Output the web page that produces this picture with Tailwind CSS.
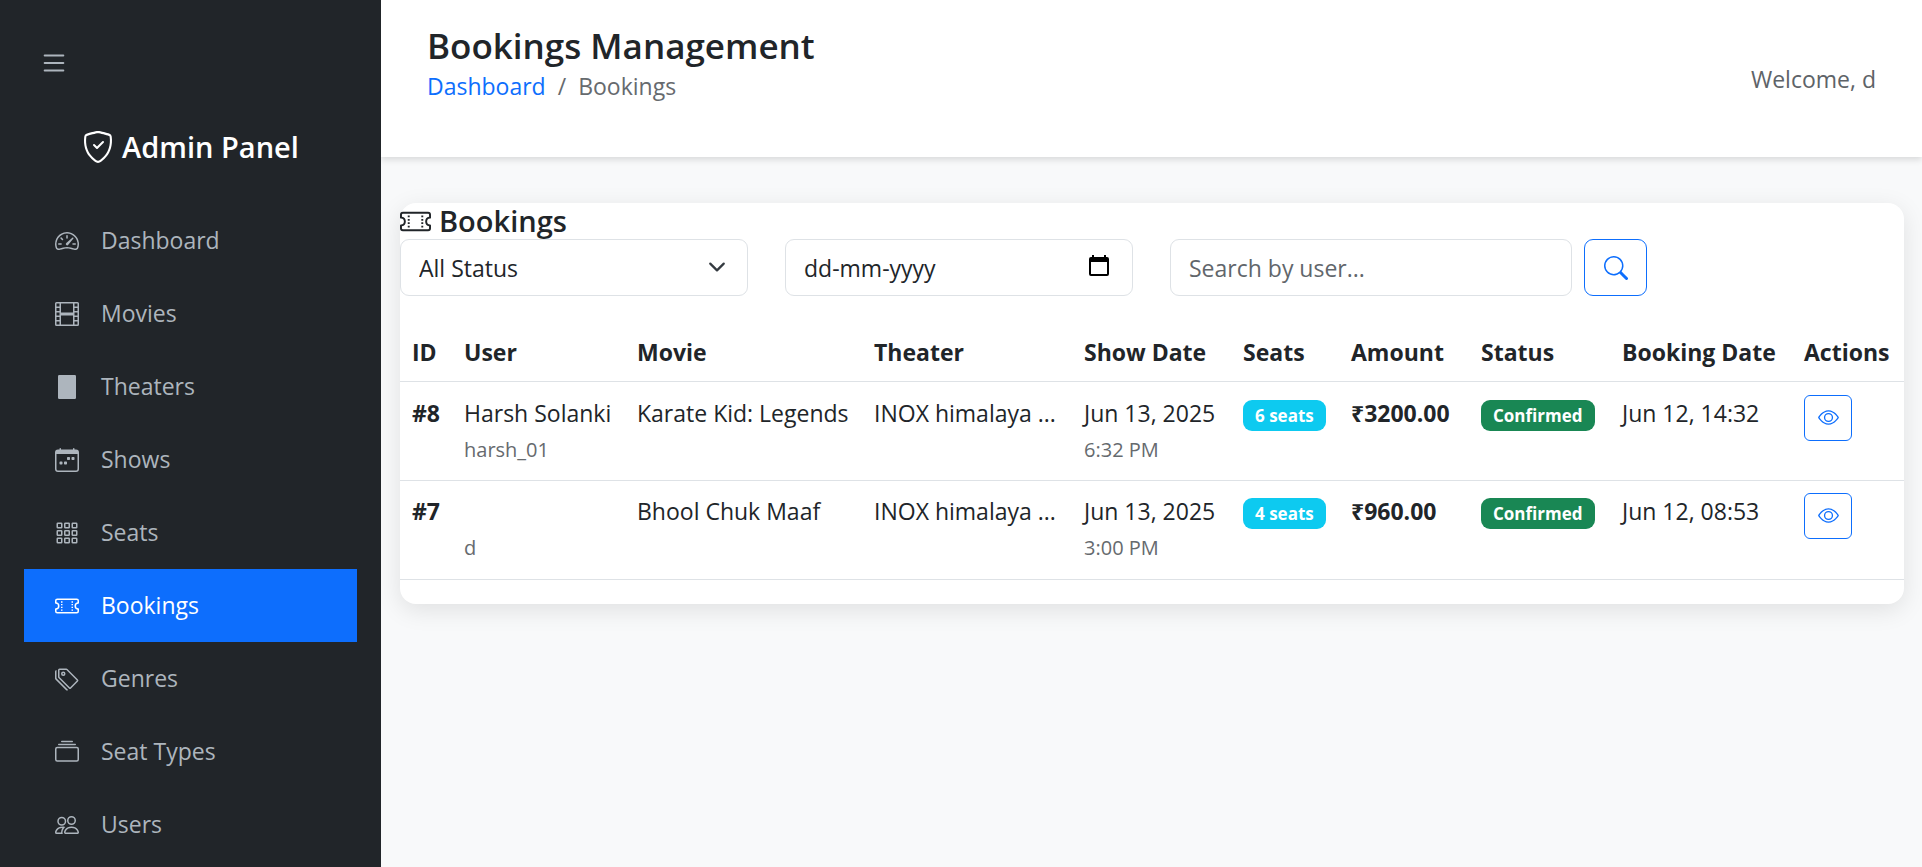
<!DOCTYPE html>
<html lang="en">
<head>
<meta charset="utf-8">
<meta name="viewport" content="width=device-width, initial-scale=1">
<title>Bookings Management</title>
<script src="https://cdn.jsdelivr.net/npm/@tailwindcss/browser@4"></script>
</head>
<body class="flex h-screen overflow-hidden bg-[#f8f9fa] font-['Open_Sans','Noto_Sans',sans-serif] text-[23px] leading-[37px] text-[#212529]">

<svg class="hidden" aria-hidden="true">
  <symbol id="ticket" viewBox="0 0 16 16"><path d="M4 4.85v.9h1v-.9zm7 0v.9h1v-.9zm-7 1.8v.9h1v-.9zm7 0v.9h1v-.9zm-7 1.8v.9h1v-.9zm7 0v.9h1v-.9zm-7 1.8v.9h1v-.9zm7 0v.9h1v-.9z"/><path d="M1.5 3A1.5 1.5 0 0 0 0 4.5V6a.5.5 0 0 0 .5.5 1.5 1.5 0 1 1 0 3 .5.5 0 0 0-.5.5v1.5A1.5 1.5 0 0 0 1.5 13h13a1.5 1.5 0 0 0 1.5-1.5V10a.5.5 0 0 0-.5-.5 1.5 1.5 0 0 1 0-3A.5.5 0 0 0 16 6V4.5A1.5 1.5 0 0 0 14.5 3zM1 4.5a.5.5 0 0 1 .5-.5h13a.5.5 0 0 1 .5.5v1.05a2.5 2.5 0 0 0 0 4.9v1.05a.5.5 0 0 1-.5.5h-13a.5.5 0 0 1-.5-.5v-1.05a2.5 2.5 0 0 0 0-4.9z"/></symbol>
  <symbol id="eye" viewBox="0 0 16 16"><path d="M16 8s-3-5.5-8-5.5S0 8 0 8s3 5.5 8 5.5S16 8 16 8M1.173 8a13 13 0 0 1 1.66-2.043C4.12 4.668 5.88 3.5 8 3.5s3.879 1.168 5.168 2.457A13 13 0 0 1 14.828 8q-.086.13-.195.288c-.335.48-.83 1.12-1.465 1.755C11.879 11.332 10.119 12.5 8 12.5s-3.879-1.168-5.168-2.457A13 13 0 0 1 1.172 8z"/><path d="M8 5.5a2.5 2.5 0 1 0 0 5 2.5 2.5 0 0 0 0-5M4.5 8a3.5 3.5 0 1 1 7 0 3.5 3.5 0 0 1-7 0"/></symbol>
</svg>

<aside class="z-10 flex w-[381px] shrink-0 flex-col bg-[#212529] px-6 pt-10">
  <button type="button" aria-label="Toggle sidebar" class="ml-[15px] flex h-[45px] w-[30px] items-center text-[#adb5bd]">
    <svg class="size-[30px]" viewBox="0 0 16 16" fill="currentColor"><path d="M2.5 12a.5.5 0 0 1 .5-.5h10a.5.5 0 0 1 0 1H3a.5.5 0 0 1-.5-.5m0-4a.5.5 0 0 1 .5-.5h10a.5.5 0 0 1 0 1H3a.5.5 0 0 1-.5-.5m0-4a.5.5 0 0 1 .5-.5h10a.5.5 0 0 1 0 1H3a.5.5 0 0 1-.5-.5"/></svg>
  </button>
  <h2 class="mt-10 mb-9 flex h-[43px] items-center justify-center gap-2 text-[29px] font-semibold text-white">
    <svg class="size-8" viewBox="0 0 16 16" fill="currentColor"><path d="M5.338 1.59a61 61 0 0 0-2.837.856.48.48 0 0 0-.328.39c-.554 4.157.726 7.19 2.253 9.188a10.7 10.7 0 0 0 2.287 2.233c.346.244.652.42.893.533q.18.085.293.118a1 1 0 0 0 .101.025 1 1 0 0 0 .1-.025q.114-.034.294-.118c.24-.113.547-.29.893-.533a10.7 10.7 0 0 0 2.287-2.233c1.527-1.997 2.807-5.031 2.253-9.188a.48.48 0 0 0-.328-.39c-.651-.213-1.75-.56-2.837-.855C9.552 1.29 8.531 1.067 8 1.067c-.53 0-1.552.223-2.662.524zM5.072.56C6.157.265 7.31 0 8 0s1.843.265 2.928.56c1.11.3 2.229.655 2.887.87a1.54 1.54 0 0 1 1.044 1.262c.596 4.477-.787 7.795-2.465 9.99a11.8 11.8 0 0 1-2.517 2.453 7 7 0 0 1-1.048.625c-.28.132-.581.24-.829.24s-.548-.108-.829-.24a7 7 0 0 1-1.048-.625 11.8 11.8 0 0 1-2.517-2.453C1.928 10.487.545 7.169 1.141 2.692A1.54 1.54 0 0 1 2.185 1.43 63 63 0 0 1 5.072.56"/><path d="M10.854 5.146a.5.5 0 0 1 0 .708l-3 3a.5.5 0 0 1-.708 0l-1.5-1.5a.5.5 0 1 1 .708-.708L7.5 7.793l2.646-2.647a.5.5 0 0 1 .708 0"/></svg>
    Admin Panel
  </h2>
  <nav class="flex flex-col text-[#adb5bd]">
    <a href="#" class="flex h-[73px] shrink-0 items-center gap-[22px] px-[31px]">
      <svg class="size-6" viewBox="0 0 16 16" fill="currentColor"><path d="M8 4a.5.5 0 0 1 .5.5V6a.5.5 0 0 1-1 0V4.5A.5.5 0 0 1 8 4M3.732 5.732a.5.5 0 0 1 .707 0l.915.914a.5.5 0 1 1-.708.708l-.914-.915a.5.5 0 0 1 0-.707M2 10a.5.5 0 0 1 .5-.5h1.586a.5.5 0 0 1 0 1H2.5A.5.5 0 0 1 2 10m9.5 0a.5.5 0 0 1 .5-.5h1.5a.5.5 0 0 1 0 1H12a.5.5 0 0 1-.5-.5m.754-4.246a.39.39 0 0 0-.527-.02L7.547 9.31a.91.91 0 1 0 1.302 1.258l3.434-4.297a.39.39 0 0 0-.029-.518z"/><path fill-rule="evenodd" d="M0 10a8 8 0 1 1 15.547 2.661c-.442 1.253-1.845 1.602-2.932 1.25C11.309 13.488 9.475 13 8 13c-1.474 0-3.31.488-4.615.911-1.087.352-2.49.003-2.932-1.25A8 8 0 0 1 0 10m8-7a7 7 0 0 0-6.603 9.329c.203.575.923.876 1.68.63C4.397 12.533 6.358 12 8 12s3.604.532 4.923.96c.757.245 1.477-.056 1.68-.631A7 7 0 0 0 8 3"/></svg>
      Dashboard
    </a>
    <a href="#" class="flex h-[73px] shrink-0 items-center gap-[22px] px-[31px]">
      <svg class="size-6" viewBox="0 0 16 16" fill="currentColor"><path d="M0 1a1 1 0 0 1 1-1h14a1 1 0 0 1 1 1v14a1 1 0 0 1-1 1H1a1 1 0 0 1-1-1zm4 0v6h8V1zm8 8H4v6h8zM1 1v2h2V1zm2 3H1v2h2zM1 7v2h2V7zm2 3H1v2h2zm-2 3v2h2v-2zM15 1h-2v2h2zm-2 3v2h2V4zm2 3h-2v2h2zm-2 3v2h2v-2zm2 3h-2v2h2z"/></svg>
      Movies
    </a>
    <a href="#" class="flex h-[73px] shrink-0 items-center gap-[22px] px-[31px]">
      <svg class="size-6" viewBox="0 0 16 16" fill="currentColor"><rect x="2" width="12" height="16" rx="0.8"/></svg>
      Theaters
    </a>
    <a href="#" class="flex h-[73px] shrink-0 items-center gap-[22px] px-[31px]">
      <svg class="size-6" viewBox="0 0 16 16" fill="currentColor"><path d="M11 6.500a.5.5 0 0 1 .5-.5h1a.5.5 0 0 1 .5.5v1a.5.5 0 0 1-.5.5h-1a.5.5 0 0 1-.5-.5zm-3 0a.5.5 0 0 1 .5-.5h1a.5.5 0 0 1 .5.5v1a.5.5 0 0 1-.5.5h-1a.5.5 0 0 1-.5-.5zm-5 3a.5.5 0 0 1 .5-.5h1a.5.5 0 0 1 .5.5v1a.5.5 0 0 1-.5.5h-1a.5.5 0 0 1-.5-.5zm3 0a.5.5 0 0 1 .5-.5h1a.5.5 0 0 1 .5.5v1a.5.5 0 0 1-.5.5h-1a.5.5 0 0 1-.5-.5z"/><path d="M3.500 0a.5.5 0 0 1 .5.5V1h8V.5a.5.5 0 0 1 1 0V1h1a2 2 0 0 1 2 2v11a2 2 0 0 1-2 2H2a2 2 0 0 1-2-2V3a2 2 0 0 1 2-2h1V.5a.5.5 0 0 1 .5-.5M1 4v10a1 1 0 0 0 1 1h12a1 1 0 0 0 1-1V4z"/></svg>
      Shows
    </a>
    <a href="#" class="flex h-[73px] shrink-0 items-center gap-[22px] px-[31px]">
      <svg class="size-6" viewBox="0 0 16 16" fill="none" stroke="currentColor"><rect x="1.500" y="1.500" width="3" height="3" rx=".4"/><rect x="6.500" y="1.500" width="3" height="3" rx=".4"/><rect x="11.500" y="1.500" width="3" height="3" rx=".4"/><rect x="1.500" y="6.500" width="3" height="3" rx=".4"/><rect x="6.500" y="6.500" width="3" height="3" rx=".4"/><rect x="11.500" y="6.500" width="3" height="3" rx=".4"/><rect x="1.500" y="11.500" width="3" height="3" rx=".4"/><rect x="6.500" y="11.500" width="3" height="3" rx=".4"/><rect x="11.500" y="11.500" width="3" height="3" rx=".4"/></svg>
      Seats
    </a>
    <a href="#" aria-current="page" class="flex h-[73px] shrink-0 items-center gap-[22px] bg-[#0d6efd] px-[31px] text-white">
      <svg class="size-6" fill="currentColor"><use href="#ticket"/></svg>
      Bookings
    </a>
    <a href="#" class="flex h-[73px] shrink-0 items-center gap-[22px] px-[31px]">
      <svg class="size-6" viewBox="0 0 16 16" fill="currentColor"><path d="M3 2v4.586l7 7L14.586 9l-7-7zM2 2a1 1 0 0 1 1-1h4.586a1 1 0 0 1 .707.293l7 7a1 1 0 0 1 0 1.414l-4.586 4.586a1 1 0 0 1-1.414 0l-7-7A1 1 0 0 1 2 6.586z"/><path d="M5.500 5a.5.5 0 1 1 0-1 .5.5 0 0 1 0 1m0 1a1.500 1.500 0 1 0 0-3 1.500 1.500 0 0 0 0 3M1 7.086a1 1 0 0 0 .293.707L8.750 15.250l-.043.043a1 1 0 0 1-1.414 0l-7-7A1 1 0 0 1 0 7.586V3a1 1 0 0 1 1-1z"/></svg>
      Genres
    </a>
    <a href="#" class="flex h-[73px] shrink-0 items-center gap-[22px] px-[31px]">
      <svg class="size-6" viewBox="0 0 16 16" fill="currentColor"><path d="M2.500 3.500a.5.5 0 0 1 0-1h11a.5.5 0 0 1 0 1zm2-2a.5.5 0 0 1 0-1h7a.5.5 0 0 1 0 1zM0 13a1.500 1.500 0 0 0 1.500 1.500h13A1.500 1.500 0 0 0 16 13V6a1.500 1.500 0 0 0-1.500-1.500h-13A1.500 1.500 0 0 0 0 6zm1.500.5A.5.5 0 0 1 1 13V6a.5.5 0 0 1 .5-.5h13a.5.5 0 0 1 .5.5v7a.5.5 0 0 1-.5.5z"/></svg>
      Seat Types
    </a>
    <a href="#" class="flex h-[73px] shrink-0 items-center gap-[22px] px-[31px]">
      <svg class="size-6" viewBox="0 0 16 16" fill="currentColor"><path d="M15 14s1 0 1-1-1-4-5-4-5 3-5 4 1 1 1 1zm-7.978-1L7 12.996c.001-.264.167-1.03.76-1.72C8.312 10.629 9.282 10 11 10c1.717 0 2.687.63 3.240 1.276.593.69.758 1.457.76 1.720l-.008.002-.014.002zM11 7a2 2 0 1 0 0-4 2 2 0 0 0 0 4m3-2a3 3 0 1 1-6 0 3 3 0 0 1 6 0M6.936 9.280a6 6 0 0 0-1.230-.247A7 7 0 0 0 5 9c-4 0-5 3-5 4q0 1 1 1h4.216A2.240 2.240 0 0 1 5 13c0-1.010.377-2.042 1.090-2.904.243-.294.526-.569.846-.816M4.920 10A5.500 5.500 0 0 0 4 13H1c0-.26.164-1.030.76-1.724.545-.636 1.492-1.256 3.160-1.275ZM1.500 5.500a3 3 0 1 1 6 0 3 3 0 0 1-6 0m3-2a2 2 0 1 0 0 4 2 2 0 0 0 0-4"/></svg>
      Users
    </a>
  </nav>
</aside>

<div class="min-w-0 flex-1">
  <header class="flex h-[157px] items-start justify-between bg-white px-[46px] pt-6 shadow-[0_3px_6px_rgba(0,0,0,0.12)]">
    <div>
      <h1 class="text-[35px] leading-[44px] font-semibold">Bookings Management</h1>
      <nav aria-label="Breadcrumb">
        <ol class="flex gap-3">
          <li><a href="#" class="text-[#0d6efd]">Dashboard</a></li>
          <li aria-hidden="true" class="text-[#666a6e]">/</li>
          <li class="text-[#666a6e]">Bookings</li>
        </ol>
      </nav>
    </div>
    <p class="mt-[37px] text-[#5e6368]">Welcome, d</p>
  </header>

  <main class="mr-[18px] ml-[19px] mt-[46px] rounded-[16px] bg-white pb-6 shadow-[0_6px_24px_rgba(0,0,0,0.1)]">
    <h2 class="flex h-9 items-center gap-2 text-[29px] leading-[34px] font-semibold">
      <svg class="size-[31px]" fill="currentColor"><use href="#ticket"/></svg>
      Bookings
    </h2>
    <form class="flex">
      <div class="relative mr-[37px] w-[348px]">
        <select aria-label="Status" class="block h-[57px] w-full appearance-none rounded-[9px] border border-[#dee2e6] bg-white pt-0.5 pl-[18px]">
          <option>All Status</option>
        </select>
        <svg class="pointer-events-none absolute top-[19px] right-[22px] size-[18px]" viewBox="0 0 16 16" fill="none" stroke="#343a40" stroke-width="2" stroke-linecap="round" stroke-linejoin="round"><path d="m2 5 6 6 6-6"/></svg>
      </div>
      <div class="relative mr-[37px] w-[348px]">
        <input type="text" aria-label="Booking date" placeholder="dd-mm-yyyy" class="block h-[57px] w-full rounded-[9px] border border-[#dee2e6] bg-white pl-[18px] placeholder:text-[#212529]">
        <button type="button" aria-label="Open calendar" class="absolute top-4 right-6 h-[22px] w-5">
          <svg class="h-[22px] w-5" viewBox="0 0 20 22"><path fill="#000" fill-rule="evenodd" d="M3 0h2v2h10V0h2v2h1a2 2 0 0 1 2 2v15a2 2 0 0 1-2 2H2a2 2 0 0 1-2-2V4a2 2 0 0 1 2-2h1zM2 7v12h16V7z"/></svg>
        </button>
      </div>
      <input type="text" aria-label="Search by user" placeholder="Search by user..." class="mr-3 h-[57px] w-[402px] rounded-[9px] border border-[#dee2e6] bg-white pl-[18px] placeholder:text-[#61666b]">
      <button type="submit" aria-label="Search" class="flex h-[57px] w-[63px] items-center justify-center rounded-[9px] border border-[#0d6efd] text-[#0d6efd]">
        <svg class="size-6" viewBox="0 0 16 16" fill="currentColor"><path d="M11.742 10.344a6.500 6.500 0 1 0-1.397 1.398h-.001q.044.06.098.115l3.850 3.850a1 1 0 0 0 1.415-1.414l-3.850-3.850a1 1 0 0 0-.115-.1zM12 6.500a5.500 5.500 0 1 1-11 0 5.500 5.500 0 0 1 11 0"/></svg>
      </button>
    </form>

    <table class="mt-6 w-full table-fixed border-collapse text-left whitespace-nowrap">
      <colgroup>
        <col class="w-[52px]"><col class="w-[173px]"><col class="w-[237px]"><col class="w-[210px]"><col class="w-[159px]"><col class="w-[108px]"><col class="w-[130px]"><col class="w-[141px]"><col class="w-[182px]"><col class="w-[112px]">
      </colgroup>
      <thead>
        <tr class="h-[61px] border-b border-[#dee2e6] *:px-3 *:pt-1 *:pb-0">
          <th>ID</th><th>User</th><th>Movie</th><th>Theater</th><th>Show Date</th><th>Seats</th><th>Amount</th><th>Status</th><th>Booking Date</th><th>Actions</th>
        </tr>
      </thead>
      <tbody>
        <tr class="h-[99px] border-b border-[#dee2e6] align-top *:px-3 *:pt-[13px] *:pb-0">
          <td class="font-bold">#8</td>
          <td>Harsh Solanki<small class="block text-[20px] leading-[36px] text-[#666a6e]">harsh_01</small></td>
          <td>Karate Kid: Legends</td>
          <td>INOX himalaya ...</td>
          <td>Jun 13, 2025<small class="block text-[20px] leading-[36px] text-[#666a6e]">6:32 PM</small></td>
          <td><span class="mt-[5px] block h-[31px] w-fit rounded-[9px] bg-[#0dcaf0] px-3 text-[17px] leading-[31px] font-bold text-white">6 seats</span></td>
          <td class="font-bold">₹3200.00</td>
          <td><span class="mt-[5px] block h-[31px] w-fit rounded-[9px] bg-[#198754] px-3 text-[17px] leading-[31px] font-bold text-white">Confirmed</span></td>
          <td>Jun 12, 14:32</td>
          <td><button type="button" aria-label="View booking 8" class="flex h-[46px] w-12 items-center justify-center rounded-[6px] border border-[#0d6efd] text-[#0d6efd]"><svg class="size-[21px]" fill="currentColor"><use href="#eye"/></svg></button></td>
        </tr>
        <tr class="h-[99px] border-b border-[#dee2e6] align-top *:px-3 *:pt-3 *:pb-0">
          <td class="font-bold">#7</td>
          <td><br><small class="block text-[20px] leading-[36px] text-[#666a6e]">d</small></td>
          <td>Bhool Chuk Maaf</td>
          <td>INOX himalaya ...</td>
          <td>Jun 13, 2025<small class="block text-[20px] leading-[36px] text-[#666a6e]">3:00 PM</small></td>
          <td><span class="mt-[5px] block h-[31px] w-fit rounded-[9px] bg-[#0dcaf0] px-3 text-[17px] leading-[31px] font-bold text-white">4 seats</span></td>
          <td class="font-bold">₹960.00</td>
          <td><span class="mt-[5px] block h-[31px] w-fit rounded-[9px] bg-[#198754] px-3 text-[17px] leading-[31px] font-bold text-white">Confirmed</span></td>
          <td>Jun 12, 08:53</td>
          <td><button type="button" aria-label="View booking 7" class="flex h-[46px] w-12 items-center justify-center rounded-[6px] border border-[#0d6efd] text-[#0d6efd]"><svg class="size-[21px]" fill="currentColor"><use href="#eye"/></svg></button></td>
        </tr>
      </tbody>
    </table>
  </main>
</div>
</body>
</html>
